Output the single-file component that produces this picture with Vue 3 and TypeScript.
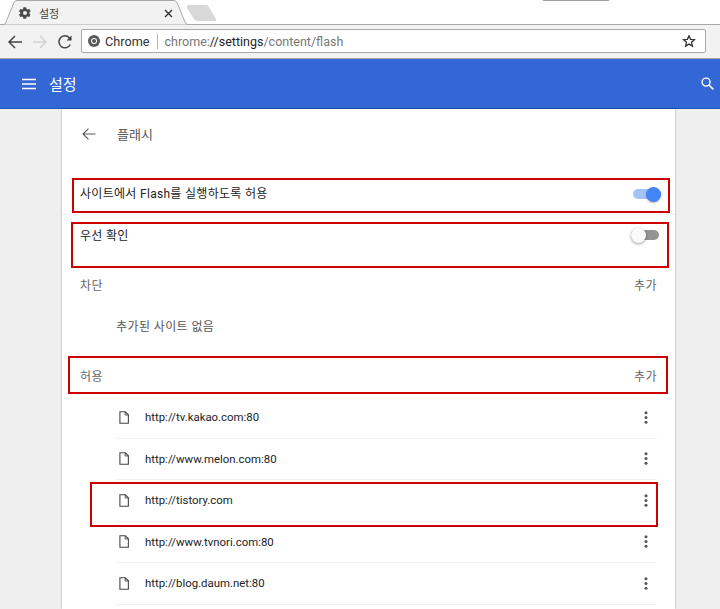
<script setup lang="ts">
const sites: string[] = [
  'http://tv.kakao.com:80',
  'http://www.melon.com:80',
  'http://tistory.com',
  'http://www.tvnori.com:80',
  'http://blog.daum.net:80',
]
</script>

<template>
  <div class="page">
    <div class="tabstrip">
      <svg class="tabshape" width="232" height="25" viewBox="0 0 232 25">
        <path d="M0 24.5H3.5Q5 24.5 6 22L14 2.5Q15 .5 17 .5H174Q176 .5 177 2.5L185 22Q186 24.5 188 24.5H232" fill="#f2f2f2" stroke="#a9a9a9" />
        <path d="M187 6.5Q187 5 189 5H206Q208 5 209 7L216 19Q217 21 215 21H197Q195 21 194 19L187 8Z" fill="#d8d8d8" />
      </svg>
      <svg class="gear" width="14" height="14" viewBox="0 0 24 24"><path fill="#4a4a4a" d="M19.4 13a7.500 7.500 0 0 0 0-2l2.100-1.600a.5.5 0 0 0 .1-.6l-2-3.500a.5.5 0 0 0-.6-.2l-2.500 1a7.300 7.300 0 0 0-1.700-1L14 2.400a.5.5 0 0 0-.5-.4h-4a.5.500 0 0 0-.5.400l-.4 2.700a7.300 7.300 0 0 0-1.700 1l-2.500-1a.5.5 0 0 0-.6.200l-2 3.500a.5.5 0 0 0 .1.600L4 11a7.500 7.500 0 0 0 0 2l-2.100 1.600a.5.5 0 0 0-.1.600l2 3.500a.5.5 0 0 0 .6.200l2.500-1a7.300 7.300 0 0 0 1.700 1l.4 2.700a.5.5 0 0 0 .5.400h4a.5.5 0 0 0 .5-.4l.4-2.700a7.300 7.300 0 0 0 1.700-1l2.500 1a.5.5 0 0 0 .6-.2l2-3.500a.5.5 0 0 0-.1-.6zM12 15.500a3.500 3.500 0 1 1 0-7 3.500 3.500 0 0 1 0 7z" /></svg>
      <span class="tabtitle">설정</span>
      <svg class="tabclose" width="9" height="9" viewBox="0 0 9 9"><path d="M1 1l7 7M8 1L1 8" stroke="#333" stroke-width="1.400" /></svg>
      <div class="winbtn"></div>
    </div>

    <div class="toolbar">
      <svg width="16" height="16" viewBox="0 0 16 16" class="nav back"><path d="M15 8H2M8 2L2 8l6 6" fill="none" stroke="#444" stroke-width="1.500" /></svg>
      <svg width="16" height="16" viewBox="0 0 16 16" class="nav fwd"><path d="M1 8h13M8 2l6 6-6 6" fill="none" stroke="#d2d2d2" stroke-width="1.500" /></svg>
      <svg width="16" height="16" viewBox="0 0 16 16" class="nav reload"><path d="M13.300 10.500A6 6 0 1 1 12.300 3.700L14 5.500" fill="none" stroke="#444" stroke-width="1.500" /><path d="M14.500 1.500v5h-5z" fill="#444" /></svg>
      <div class="omnibox">
        <svg width="12" height="12" viewBox="0 0 12 12" class="chromeicon"><circle cx="6" cy="6" r="6" fill="#5a5a5a" /><circle cx="6" cy="6" r="3" fill="#fff" /><circle cx="6" cy="6" r="2.100" fill="#5a5a5a" /></svg>
        <span class="chip">Chrome</span>
        <span class="divider"></span>
        <span class="url">chrome:<b>//settings</b>/content/flash</span>
        <svg width="14" height="14" viewBox="0 0 24 24" class="star"><path d="M12 3l2.700 6.200 6.700.6-5.100 4.400 1.600 6.600L12 17.300l-5.900 3.500 1.600-6.600-5.100-4.400 6.700-.6z" fill="none" stroke="#333" stroke-width="2.200" /></svg>
      </div>
    </div>

    <header class="appbar">
      <svg width="14" height="12" viewBox="0 0 14 12"><path d="M0 1.500h14M0 6h14M0 10.500h14" stroke="#fff" stroke-width="1.600" /></svg>
      <span class="apptitle">설정</span>
      <svg class="search" width="13" height="13" viewBox="0 0 14 14"><circle cx="5.500" cy="5.500" r="4.300" fill="none" stroke="#fff" stroke-width="1.500" /><path d="M8.700 8.700L13.300 13.300" stroke="#fff" stroke-width="1.700" /></svg>
    </header>

    <main class="content">
      <section class="card">
        <div class="subhead">
          <svg width="14" height="12" viewBox="0 0 14 12"><path d="M13.500 6H1M6.500 .6L1 6l5.500 5.400" fill="none" stroke="#5f5f5f" stroke-width="1.200" /></svg>
          <span class="subtitle">플래시</span>
        </div>

        <div class="toggle-row main-toggle">
          <span class="strong">사이트에서 Flash를 실행하도록 허용</span>
          <span class="switch on"><i></i></span>
        </div>
        <div class="toggle-row ask-toggle">
          <span class="strong">우선 확인</span>
          <span class="switch off"><i></i></span>
        </div>

        <div class="section-head block-head"><span>차단</span><span>추가</span></div>
        <div class="empty">추가된 사이트 없음</div>
        <div class="section-head allow-head"><span>허용</span><span>추가</span></div>

        <ul class="sites">
          <li v-for="site in sites" :key="site" class="site">
            <svg width="10" height="13" viewBox="0 0 11 14" class="file"><path d="M1 .7h6l3.300 3.300v9.300H1z" fill="#fff" stroke="#444" stroke-width="1.200" /><path d="M6.800 .7v3.500h3.500" fill="none" stroke="#444" stroke-width="1" /></svg>
            <span class="siteurl">{{ site }}</span>
            <svg width="4" height="13" viewBox="0 0 4 13" class="more"><circle cx="2" cy="1.700" r="1.500" fill="#555" /><circle cx="2" cy="6.500" r="1.500" fill="#555" /><circle cx="2" cy="11.300" r="1.500" fill="#555" /></svg>
          </li>
        </ul>
      </section>
    </main>

    <div class="mark m1"></div>
    <div class="mark m2"></div>
    <div class="mark m3"></div>
    <div class="mark m4"></div>
  </div>
</template>

<style>
html, body { margin: 0; background: #efefef; }
</style>

<style scoped>
.page {
  position: relative;
  width: 720px;
  height: 609px;
  overflow: hidden;
  font-family: Roboto, "Noto Sans CJK KR", sans-serif;
  background: #efefef;
  color: #333;
}
.tabstrip {
  position: relative;
  height: 25px;
  background: #fff;
  display: flex;
  align-items: center;
  box-shadow: inset 0 -1px 0 #a9a9a9;
}
.tabshape { position: absolute; left: 0; top: 0; }
.gear { position: relative; margin-left: 18px; margin-top: 0; }
.tabtitle { position: relative; margin-left: 7px; font-size: 11px; color: #444; }
.tabclose { position: relative; margin-left: 105px; margin-top: 1px; }
.winbtn { position: absolute; left: 543px; top: 0; width: 66px; height: 1px; background: #a0a0a0; }

.toolbar {
  height: 34px;
  box-sizing: border-box;
  background: #f2f2f2;
  display: flex;
  align-items: center;
  padding: 0 14px 0 7px;
  border-bottom: 1px solid #a8a8a8;
}
.nav { flex: none; }
.fwd { margin-left: 9px; }
.reload { margin-left: 9px; }
.omnibox {
  margin-left: 8px;
  margin-bottom: 1px;
  flex: 1;
  height: 24px;
  box-sizing: border-box;
  border: 1px solid #a9a9a9;
  border-radius: 2px;
  background: #fff;
  display: flex;
  align-items: center;
  padding: 0 9px 0 6px;
}
.chromeicon { flex: none; }
.chip { margin-left: 5px; font-size: 12.700px; color: #333; }
.divider { width: 1px; height: 15px; background: #b5b5b5; margin: 0 7px; }
.url { font-size: 12.500px; color: #777; flex: 1; }
.url b { font-weight: 400; color: #222; }
.star { flex: none; }

.appbar {
  height: 50px;
  box-sizing: border-box;
  background: #3367d6;
  border-bottom: 1px solid #1a55bd;
  display: flex;
  align-items: center;
  padding: 0 6px 0 22px;
  color: #fff;
}
.apptitle { margin-left: 13px; font-size: 15px; flex: 1; }

.content { display: flex; }
.card {
  margin-left: 62px;
  width: 613px;
  height: 500px;
  box-sizing: border-box;
  background: #fff;
  box-shadow: 0 0 2px rgba(0, 0, 0, .35);
  padding: 0 18px;
}
.subhead {
  height: 49px;
  display: flex;
  align-items: center;
  padding-left: 2px;
}
.subtitle { margin-left: 21px; font-size: 13px; color: #555; }

.toggle-row {
  display: flex;
  justify-content: space-between;
  font-size: 12px;
  color: #222;
  margin: 0 -18px;
  padding: 0 16px 0 18px;
}
.main-toggle {
  height: 57px;
  padding-top: 28px;
  padding-right: 14px;
  box-sizing: border-box;
  align-items: flex-start;
  border-bottom: 1px solid #f2f2f2;
}
.ask-toggle {
  height: 59px;
  padding-top: 13px;
  box-sizing: border-box;
  align-items: flex-start;
}
.strong { line-height: 17px; letter-spacing: .3px; }
.switch { position: relative; display: block; width: 28px; height: 10px; border-radius: 5px; margin-top: 3px; }
.switch i { position: absolute; top: -2.500px; width: 15px; height: 15px; border-radius: 50%; }
.switch.on { background: #a3c4fa; }
.switch.on i { right: 0; background: #4285f4; box-shadow: 0 1px 2px rgba(0, 0, 0, .3); }
.switch.off { background: #949494; margin-top: 2px; }
.switch.off i { left: 0; background: #fafafa; box-shadow: 0 1px 3px rgba(0, 0, 0, .4); }

.section-head {
  display: flex;
  justify-content: space-between;
  font-size: 12px;
  letter-spacing: .5px;
  color: #666;
}
.block-head { height: 20px; align-items: center; }
.empty { height: 71px; padding: 23px 0 0 36px; box-sizing: border-box; font-size: 12px; letter-spacing: .4px; color: #555; line-height: 20px; }
.allow-head { height: 20px; align-items: center; }

.sites { list-style: none; margin: 12px 0 0; padding: 0 0 0 36px; }
.site {
  height: 41.500px;
  box-sizing: border-box;
  border-bottom: 1px solid #f0f0f0;
  display: flex;
  align-items: center;
}
.file { flex: none; margin-left: 3px; }
.siteurl { margin-left: 16px; font-size: 11.400px; color: #222; flex: 1; }
.more { margin-right: 9px; flex: none; }

.mark { position: absolute; box-sizing: border-box; border: 2px solid #cc0000; }
.m1 { left: 72px; top: 178px; width: 598px; height: 35px; }
.m2 { left: 71px; top: 222px; width: 598px; height: 46px; }
.m3 { left: 68px; top: 356px; width: 600px; height: 38px; }
.m4 { left: 90px; top: 482px; width: 568px; height: 45px; }
</style>
